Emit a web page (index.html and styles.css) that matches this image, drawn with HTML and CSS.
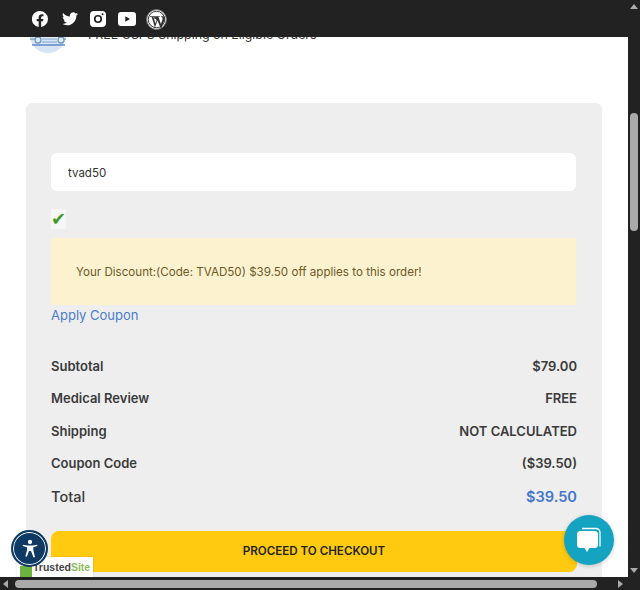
FILE: index.html
```html
<!DOCTYPE html>
<html lang="en">
<head>
    <meta charset="UTF-8">
    <meta name="viewport" content="width=device-width, initial-scale=1.0">
    <title>Cart</title>
    <link rel="stylesheet" href="styles.css">
</head>
<body>
    <div class="window">
        <header class="topbar">
            <!-- facebook -->
            <svg class="social fb" width="16" height="16" viewBox="0 0 18 18"><path fill="#fff" d="M9 0a9 9 0 0 0-1.500 17.900v-6.300H5.300V9h2.200V7.100c0-2.300 1.300-3.500 3.400-3.500 1 0 2 .2 2 .2v2.200h-1.100c-1.100 0-1.500.7-1.500 1.400V9h2.500l-.4 2.600h-2.100v6.300A9 9 0 0 0 9 0z"/></svg>
            <!-- twitter -->
            <svg class="social" width="16" height="14" viewBox="0 0 24 20"><path fill="#fff" d="M24 2.400c-.9.4-1.800.7-2.800.8 1-.6 1.800-1.600 2.200-2.700-1 .6-2 1-3.100 1.200A4.900 4.900 0 0 0 11.900 6.200C7.800 6 4.200 4 1.700.9c-1.300 2.200-.7 5.100 1.500 6.600-.8 0-1.600-.2-2.200-.6 0 2.300 1.600 4.400 3.900 4.900-.7.2-1.500.2-2.200.1.600 2 2.400 3.400 4.600 3.400A9.900 9.900 0 0 1 0 17.300 14 14 0 0 0 7.500 19.500c9.100 0 14.300-7.700 14-14.600 1-.7 1.800-1.500 2.500-2.500z"/></svg>
            <!-- instagram -->
            <svg class="social" width="16" height="16" viewBox="0 0 16 16"><path fill="#fff" fill-rule="evenodd" d="M4 0h8a4 4 0 0 1 4 4v8a4 4 0 0 1-4 4H4a4 4 0 0 1-4-4V4a4 4 0 0 1 4-4zm4 3.900a4.100 4.100 0 1 0 0 8.200 4.100 4.100 0 0 0 0-8.200zm0 1.700a2.400 2.400 0 1 1 0 4.800 2.400 2.400 0 0 1 0-4.800zM12.600 2.300a1 1 0 1 0 0 2 1 1 0 0 0 0-2z"/></svg>
            <!-- youtube -->
            <svg class="social yt" width="18" height="14" viewBox="0 0 18 14"><path fill="#fff" fill-rule="evenodd" d="M3 0h12a3 3 0 0 1 3 3v8a3 3 0 0 1-3 3H3a3 3 0 0 1-3-3V3a3 3 0 0 1 3-3zm4.300 4.200v5.600L12 7z"/></svg>
            <!-- wordpress -->
            <svg class="social" width="21" height="21" viewBox="0 0 21 21"><circle cx="10.500" cy="10.500" r="9.900" fill="#e4e4e4" stroke="#777" stroke-width="1"/><circle cx="10.500" cy="10.500" r="8.200" fill="#fff" stroke="#444" stroke-width="1"/><path fill="#333" d="M3.300 7.200h5.200v.7l-1.100.2 2.300 7-.9 2.600L5.600 8.100l-1.200-.2zM8.300 7.200h5.400v.7l-1.200.2 2.400 7 1.500-4.400c.4-1.300-.1-2.300-.7-2.600l-.5-.2v-.7h3.100l.7 2.800-3.700 9h-.8l-2.900-7.500-2.900 7.500h-.5l.9-2.800 1.400-4.600-.7-1.700-1.500-.2z"/></svg>
        </header>

        <div class="middle">
            <main class="page">
                <div class="shipping">
                    <svg class="truck" width="40" height="29" viewBox="0 0 40 29"><circle cx="19" cy="10" r="18" fill="#d6e4f5"/><path d="M7 8h24v7H7z" fill="#e3edf8"/><path d="M3 20h33" stroke="#5f8cc4" stroke-width="1.500"/><path d="M1 14h6M31 14h6" stroke="#9db9dc" stroke-width="2"/><circle cx="9" cy="15" r="3" fill="#e3edf8" stroke="#6f96c8" stroke-width="1.300"/><circle cx="32" cy="15" r="3" fill="#e3edf8" stroke="#6f96c8" stroke-width="1.300"/><path d="M13 14h15M13 17h15" stroke="#7fa3d0" stroke-width="1"/></svg>
                    <span>FREE USPS Shipping on Eligible Orders</span>
                </div>

                <section class="summary">
                    <input class="coupon-input" type="text" value="tvad50">
                    <div class="check"><span>✔</span></div>
                    <div class="notice">Your Discount:(Code: TVAD50) $39.50 off applies to this order!</div>
                    <a class="apply" href="#">Apply Coupon</a>

                    <div class="totals">
                        <div class="row"><span>Subtotal</span><span>$79.00</span></div>
                        <div class="row"><span>Medical Review</span><span>FREE</span></div>
                        <div class="row"><span>Shipping</span><span>NOT CALCULATED</span></div>
                        <div class="row"><span>Coupon Code</span><span>($39.50)</span></div>
                        <div class="row total"><span>Total</span><span class="total-price">$39.50</span></div>
                    </div>

                    <button class="checkout">PROCEED TO CHECKOUT</button>
                </section>
            </main>

            <div class="vscroll">
                <div class="arrow-up"></div>
                <div class="vthumb"></div>
                <div class="arrow-down"></div>
            </div>
        </div>

        <div class="hscroll">
            <div class="arrow-left"></div>
            <div class="hthumb"></div>
            <div class="arrow-right"></div>
        </div>

        <!-- floating widgets -->
        <div class="trusted"><span class="trusted-badge"></span><b>Trusted</b><b class="site">Site</b></div>
        <div class="a11y">
            <svg width="16" height="20" viewBox="0 0 24 28"><circle cx="12" cy="3.500" r="3.200" fill="#fff"/><path fill="#fff" d="M1.500 7.500l6.500 1.300h8l6.500-1.300.5 2-6 1.700v4.800l2.500 10-2.300.7L13.500 17h-3l-3.200 8.700-2.300-.7L7.500 16v-4.800L1 9.500z"/></svg>
        </div>
        <div class="chat">
            <svg width="26" height="28" viewBox="0 0 26 28"><path fill="none" stroke="#fff" stroke-width="1.300" d="M6 2.500h14a4 4 0 0 1 4 4v14"/><path fill="#fff" d="M4.500 5h14a3.500 3.500 0 0 1 3.500 3.500v10a3.500 3.500 0 0 1-3.500 3.500h-5L11 26l-2.500-4h-4A3.500 3.500 0 0 1 1 18.500v-10A3.500 3.500 0 0 1 4.500 5z"/></svg>
        </div>
    </div>
</body>
</html>
```

FILE: styles.css
```css
html, body { margin: 0; padding: 0; }
body { font-family: Inter, "Liberation Sans", sans-serif; color: #333; }

.window { position: relative; width: 640px; height: 590px; overflow: hidden; background: #222; display: flex; flex-direction: column; }

.topbar { height: 37px; flex: none; background: #222; display: flex; align-items: center; gap: 12px; padding: 1px 0 0 32px; box-sizing: border-box; }
.social { flex: none; }
.fb { margin-right: 2px; }
.yt { margin-right: -2px; }

.middle { flex: 1; display: flex; min-height: 0; }
.page { width: 628px; background: #fff; overflow: hidden; }

.shipping { height: 28px; margin-top: -12px; margin-left: 29px; display: flex; gap: 19px; align-items: flex-start; font-size: 12.400px; line-height: 20px; color: #333; }
.truck { flex: none; }

.summary { margin: 50px 26px 0 26px; padding: 50px 25px 0 25px; height: 520px; background: #eee; border-radius: 6px; }

.coupon-input { display: block; width: 525px; height: 38px; box-sizing: border-box; border: none; border-radius: 6px; background: #fff; padding: 2px 17px 0; font-family: Inter, sans-serif; font-size: 11.500px; color: #333; }
.check { height: 47px; box-sizing: border-box; padding-top: 18px; font-family: "DejaVu Sans", sans-serif; font-size: 18px; line-height: 20px; color: #3f9a1f; }
.check span { display: inline-block; background: #f6f6f6; }
.notice { width: 525px; height: 67px; box-sizing: border-box; display: flex; align-items: center; padding-left: 25px; background: #fdf2cf; font-size: 11.600px; color: #6b5a28; }
.apply { display: block; font-size: 13px; line-height: 20px; color: #4a7cc9; text-decoration: none; }

.totals { margin-top: 31px; }
.row { display: flex; justify-content: space-between; height: 32.400px; font-size: 13px; line-height: 20px; font-weight: 600; color: #3a3a3a; }
.total { font-size: 14.600px; font-weight: 500; padding-top: 1px; }
.total-price { color: #4377c9; font-weight: 600; }

.checkout { display: block; width: 100%; height: 41px; margin-top: 12px; border: none; border-radius: 8px; background: #ffca0f; font-family: Inter, sans-serif; font-size: 11.600px; font-weight: 600; color: #222; }

.vscroll { position: relative; flex: 1; background: #222; }
.vthumb { position: absolute; left: 2px; top: 76px; width: 8px; height: 118px; border-radius: 4px; background: #a9a9a9; }
.arrow-up { position: absolute; left: 2px; top: -33px; border: 4px solid transparent; border-top: 0; border-bottom: 5px solid #aaa; }
.arrow-down { position: absolute; left: 2px; bottom: 4px; border: 4px solid transparent; border-bottom: 0; border-top: 5px solid #aaa; }

.hscroll { position: relative; height: 13px; flex: none; background: #222; }
.hthumb { position: absolute; left: 15px; top: 3px; width: 582px; height: 8px; border-radius: 4px; background: #a9a9a9; }
.arrow-left { position: absolute; left: 3px; top: 3px; border: 4px solid transparent; border-left: 0; border-right: 5px solid #aaa; }
.arrow-right { position: absolute; left: 618px; top: 3px; border: 4px solid transparent; border-right: 0; border-left: 5px solid #aaa; }

.trusted { position: absolute; left: 17px; top: 557px; width: 76px; height: 20px; background: #fff; display: flex; align-items: center; font-family: "Liberation Sans", sans-serif; font-size: 10.500px; color: #444; box-shadow: 0 0 2px rgba(0, 0, 0, 0.15); }
.trusted-badge { width: 12px; height: 11px; margin: 8px 1px 0 3px; background: #6cb33f; flex: none; }
.trusted .site { color: #8dbb5a; }

.a11y { position: absolute; left: 11px; top: 530px; width: 33px; height: 33px; border: 2px solid #0e3a63; border-radius: 50%; background: #0e3a63; box-shadow: inset 0 0 0 1px #fff; display: flex; align-items: center; justify-content: center; }
.chat { position: absolute; left: 564px; top: 515px; width: 50px; height: 50px; border-radius: 50%; background: #14a3c0; display: flex; align-items: center; justify-content: center; box-shadow: 0 1px 4px rgba(0, 0, 0, 0.2); }
```
